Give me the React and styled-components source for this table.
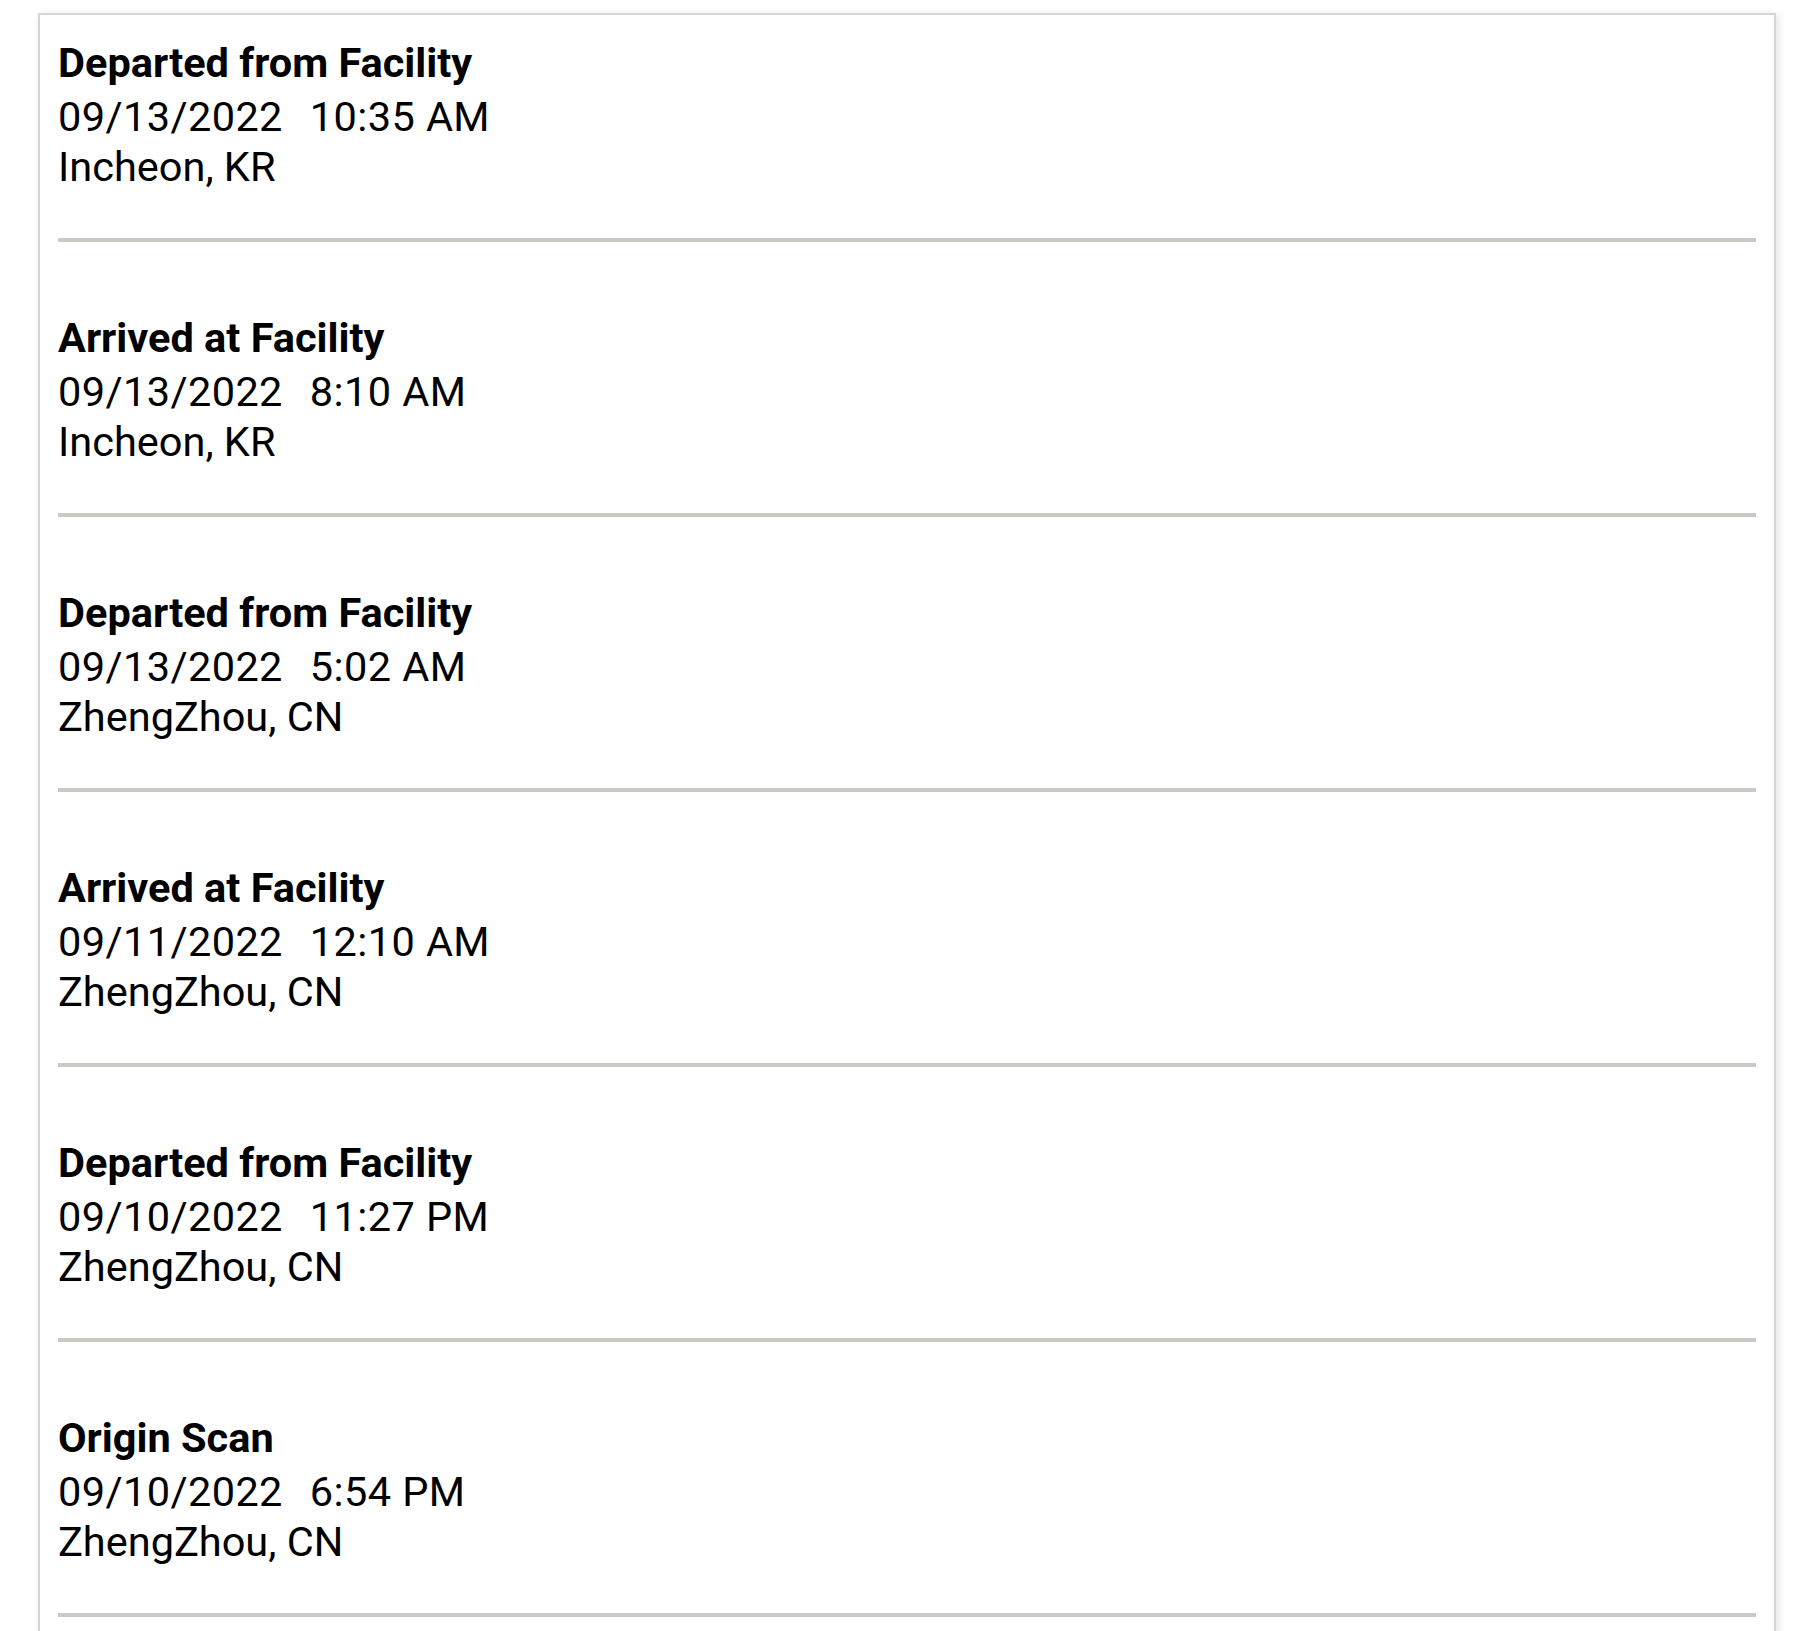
import React from 'react'
import styled, { createGlobalStyle } from 'styled-components'

const events = [
  { status: 'Departed from Facility', date: '09/13/2022', time: '10:35 AM', place: 'Incheon, KR' },
  { status: 'Arrived at Facility', date: '09/13/2022', time: '8:10 AM', place: 'Incheon, KR' },
  { status: 'Departed from Facility', date: '09/13/2022', time: '5:02 AM', place: 'ZhengZhou, CN' },
  { status: 'Arrived at Facility', date: '09/11/2022', time: '12:10 AM', place: 'ZhengZhou, CN' },
  { status: 'Departed from Facility', date: '09/10/2022', time: '11:27 PM', place: 'ZhengZhou, CN' },
  { status: 'Origin Scan', date: '09/10/2022', time: '6:54 PM', place: 'ZhengZhou, CN' },
]

export default function App(){
  return(
    <Page>
      <GlobalStyle/>
      <Card>
        {events.map((e, i)=>(
          <Event key={i}>
            <Status>{e.status}</Status>
            <Line>
              <Stamp>{e.date}</Stamp>
              <Stamp $gap>{e.time}</Stamp>
            </Line>
            <Line>{e.place}</Line>
          </Event>
        ))}
      </Card>
    </Page>
  )
}

const GlobalStyle = createGlobalStyle`
html, body{
  margin: 0;
  padding: 0;
  background: #ffffff;
}
body{
  font-family: Roboto, "Liberation Sans", sans-serif;
  color: #000;
}
`

const Page = styled.div`
height: 1631px;
overflow: hidden;
padding: 13px 0 0 38px;
box-sizing: border-box;
`

const Card = styled.div`
width: 1738px;
box-sizing: border-box;
background: #fff;
border: 2px solid #d6d6d6;
box-shadow: 2px 2px 8px rgba(0,0,0,0.12);
padding: 0 18px 120px;
`

const Event = styled.div`
padding: 71px 0 46px;
border-bottom: 4px solid #ccc9c4;
&:first-child{
  padding-top: 23px;
}
`

const Status = styled.div`
font-size: 41.5px;
line-height: 50px;
font-weight: 700;
margin-bottom: 4px;
`

const Line = styled.div`
font-size: 41.5px;
line-height: 50px;
font-weight: 400;
`

const Stamp = styled.span`
letter-spacing: 0.4px;
margin-left: ${p => p.$gap ? '27px' : '0'};
`
